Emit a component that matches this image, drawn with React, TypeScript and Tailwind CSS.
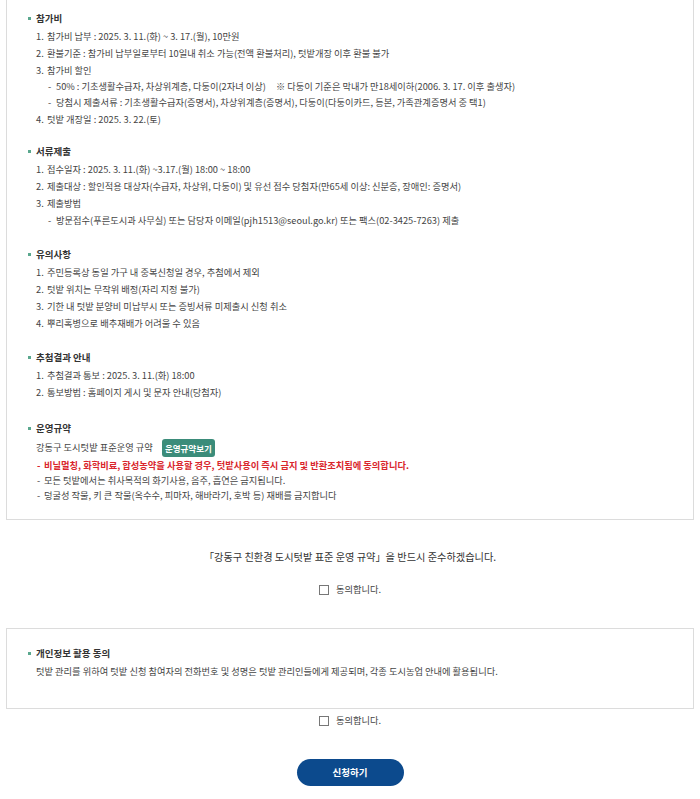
import React from 'react';

const font = { fontFamily: '"Noto Sans CJK KR", "Noto Sans", sans-serif' };

function Title({ children }: { children: React.ReactNode }) {
  return (
    <div className="flex items-center h-[19px] pl-[21px]">
      <span className="w-[3px] h-[3px] bg-[#5aa88e] mr-[5px]" />
      <span className="text-[9.5px] font-bold text-[#333]">{children}</span>
    </div>
  );
}

function Item({ n, children }: { n: number; children: React.ReactNode }) {
  return (
    <div className="flex h-[17px] items-center pl-[29px] text-[9.25px] text-[#444]">
      <span className="w-[11px]">{n}.</span>
      <span>{children}</span>
    </div>
  );
}

function Sub({ children, h = 'h-[17px]' }: { children: React.ReactNode; h?: string }) {
  return (
    <div className={`flex ${h} items-center pl-[41px] text-[9.25px] text-[#444]`}>
      <span className="w-[8px]">-</span>
      <span>{children}</span>
    </div>
  );
}

function Agree() {
  return (
    <div className="flex h-[20px] items-center justify-center gap-[7px] text-[9.25px] text-[#444]">
      <span className="w-[10px] h-[10px] border border-[#777] bg-white" />
      <span>동의합니다.</span>
    </div>
  );
}

export default function App() {
  return (
    <div style={font} className="w-[700px] h-[799px] overflow-hidden bg-white px-[6px]">
      <div className="-mt-[20px] border border-[#dcdcdc] pt-[28px] pb-[16px]">
        <Title>참가비</Title>
        <Item n={1}>참가비 납부 : 2025. 3. 11.(화) ~ 3. 17.(월), 10만원</Item>
        <Item n={2}>환불기준 : 참가비 납부일로부터 10일내 취소 가능(전액 환불처리), 텃밭개장 이후 환불 불가</Item>
        <Item n={3}>참가비 할인</Item>
        <Sub h="h-[16px]">
          50% : 기초생활수급자, 차상위계층, 다둥이(2자녀 이상)<span className="ml-[10px]">※ 다둥이 기준은 막내가 만18세이하(2006. 3. 17. 이후 출생자)</span>
        </Sub>
        <Sub h="h-[16px]">당첨시 제출서류 : 기초생활수급자(증명서), 차상위계층(증명서), 다둥이(다둥이카드, 등본, 가족관계증명서 중 택1)</Sub>
        <Item n={4}>텃밭 개장일 : 2025. 3. 22.(토)</Item>

        <div className="mt-[14px]">
          <Title>서류제출</Title>
          <Item n={1}>접수일자 : 2025. 3. 11.(화) ~3.17.(월) 18:00 ~ 18:00</Item>
          <Item n={2}>제출대상 : 할인적용 대상자(수급자, 차상위, 다둥이) 및 유선 접수 당첨자(만65세 이상: 신분증, 장애인: 증명서)</Item>
          <Item n={3}>제출방법</Item>
          <Sub>방문접수(푸른도시과 사무실) 또는 담당자 이메일(pjh1513@seoul.go.kr) 또는 팩스(02-3425-7263) 제출</Sub>
        </div>

        <div className="mt-[16px]">
          <Title>유의사항</Title>
          <Item n={1}>주민등록상 동일 가구 내 중복신청일 경우, 추첨에서 제외</Item>
          <Item n={2}>텃밭 위치는 무작위 배정(자리 지정 불가)</Item>
          <Item n={3}>기한 내 텃밭 분양비 미납부시 또는 증빙서류 미제출시 신청 취소</Item>
          <Item n={4}>뿌리혹병으로 배추재배가 어려울 수 있음</Item>
        </div>

        <div className="mt-[16px]">
          <Title>추첨결과 안내</Title>
          <Item n={1}>추첨결과 통보 : 2025. 3. 11.(화) 18:00</Item>
          <Item n={2}>통보방법 : 홈페이지 게시 및 문자 안내(당첨자)</Item>
        </div>

        <div className="mt-[18px]">
          <Title>운영규약</Title>
          <div className="flex h-[20px] items-center pl-[29px] text-[9.25px] text-[#444]">
            <span>강동구 도시텃밭 표준운영 규약</span>
            <span className="ml-[9px] inline-flex h-[18px] w-[53px] items-center justify-center rounded-[3px] bg-[#3b8c7a] text-[8.5px] font-bold text-white">
              운영규약보기
            </span>
          </div>
          <div className="flex h-[15px] items-center pl-[30px] text-[9.25px] font-semibold text-[#d9262c]">
            <span className="w-[7px]">-</span>
            <span>비닐멀칭, 화학비료, 합성농약을 사용할 경우, 텃밭사용이 즉시 금지 및 반환조치됨에 동의합니다.</span>
          </div>
          <div className="flex h-[15px] items-center pl-[30px] text-[9.25px] text-[#444]">
            <span className="w-[7px]">-</span>
            <span>모든 텃밭에서는 취사목적의 화기사용, 음주, 흡연은 금지됩니다.</span>
          </div>
          <div className="flex h-[15px] items-center pl-[30px] text-[9.25px] text-[#444]">
            <span className="w-[7px]">-</span>
            <span>덩굴성 작물, 키 큰 작물(옥수수, 피마자, 해바라기, 호박 등) 재배를 금지합니다</span>
          </div>
        </div>
      </div>

      <div className="mt-[27px] flex h-[20px] items-center justify-center text-[10.2px] text-[#333]">
        「강동구 친환경 도시텃밭 표준 운영 규약」을 반드시 준수하겠습니다.
      </div>
      <div className="mt-[13px]">
        <Agree />
      </div>

      <div className="mt-[28px] border border-[#dcdcdc] pt-[15px] pb-[28px]">
        <Title>개인정보 활용 동의</Title>
        <div className="flex h-[17px] items-center pl-[29px] text-[9.25px] text-[#444]">
          텃밭 관리를 위하여 텃밭 신청 참여자의 전화번호 및 성명은 텃밭 관리인들에게 제공되며, 각종 도시농업 안내에 활용됩니다.
        </div>
      </div>

      <div className="mt-[2px]">
        <Agree />
      </div>

      <div className="mt-[28px] flex justify-center">
        <button className="h-[27px] w-[107px] rounded-full bg-[#0c4a8d] text-[9.5px] font-bold text-white">신청하기</button>
      </div>
    </div>
  );
}
